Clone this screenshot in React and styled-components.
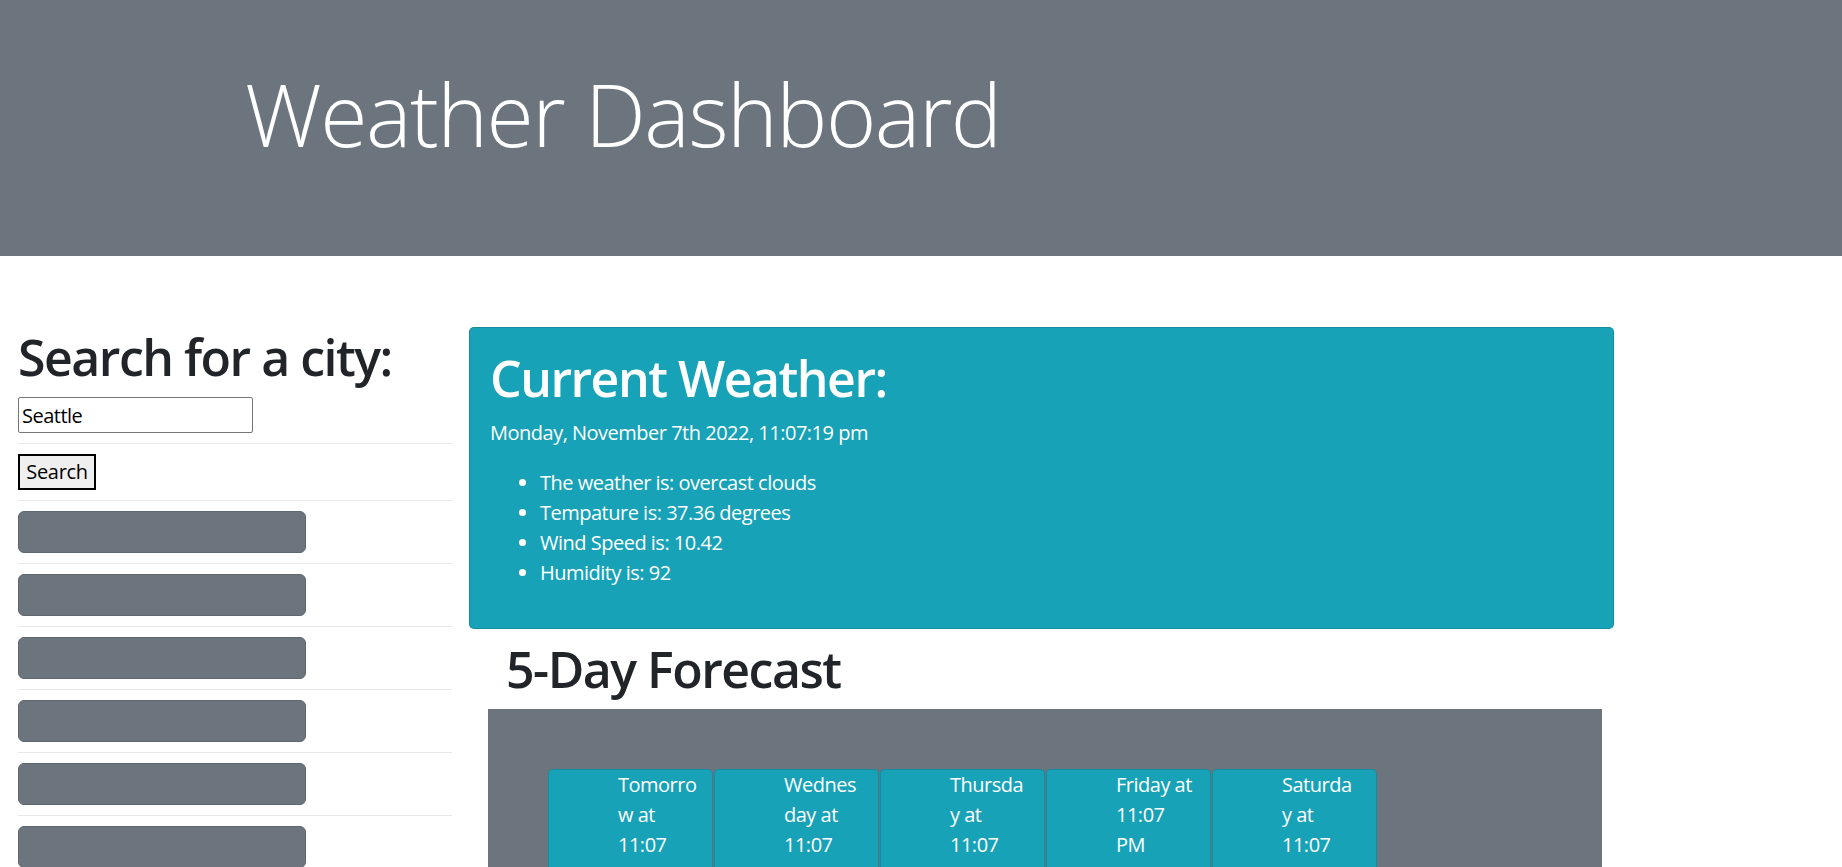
import React from "react";
import styled, { createGlobalStyle } from "styled-components";

const GlobalStyle = createGlobalStyle`
  html { scrollbar-width: none; }
  html::-webkit-scrollbar { display: none; }
  body {
    margin: 0;
    font-family: "Open Sans", "Noto Sans", sans-serif;
    font-size: 20px;
    letter-spacing: -0.5px;
    line-height: 1.5;
    color: #212529;
    background: #fff;
  }
  *, *::before, *::after { box-sizing: border-box; }
`;

const Header = styled.header`
  background: #6c757d;
  height: 256px;
  padding: 62px 0 0 245px;
`;

const Title = styled.h1`
  margin: 0;
  font-family: "Open Sans", sans-serif;
  font-weight: 300;
  font-size: 86px;
  letter-spacing: -1.5px;
  line-height: 104px;
  color: #fff;
`;

const Main = styled.main`
  display: flex;
  align-items: flex-start;
  gap: 17px;
  padding: 71px 0 0 18px;
`;

const Sidebar = styled.aside`
  width: 434px;
  flex: none;
`;

const Heading = styled.h1`
  margin: 0 0 10px ${(p) => p.$indent || 0}px;
  font-size: 50px;
  font-weight: 600;
  letter-spacing: -1.5px;
  line-height: 60px;
  color: ${(p) => (p.$light ? "#fff" : "#212529")};
`;

const SearchList = styled.ul`
  list-style: none;
  margin: 0;
  padding: 0;
`;

const SearchItem = styled.li`
  display: flex;
  padding: ${(p) => (p.$first ? "0 0 10px" : "10px 0")};
  border-bottom: 1px solid #e6e8ea;
`;

const CityInput = styled.input`
  width: 235px;
  height: 36px;
  border: 1px solid #767676;
  border-radius: 2px;
  padding: 1px 3px;
  font-family: inherit;
  font-size: 20px;
  letter-spacing: -0.5px;
  color: #000;
`;

const SearchButton = styled.button`
  width: 78px;
  height: 36px;
  border: 2px solid #000;
  border-radius: 0;
  background: #efefef;
  font-family: inherit;
  font-size: 20px;
  letter-spacing: -0.3px;
  line-height: 1;
  color: #000;
  padding: 0;
`;

const HistoryButton = styled.button`
  width: 288px;
  height: 42px;
  background: #6c757d;
  border: 1px solid #5f676e;
  border-radius: 6px;
`;

const Content = styled.section`
  width: 1145px;
  flex: none;
`;

const CurrentCard = styled.div`
  background: #17a2b8;
  border: 1px solid rgba(0, 0, 0, 0.125);
  border-radius: 5px;
  padding: 20px;
  color: #fff;
`;

const DateLine = styled.p`
  margin: 0 0 20px;
  line-height: 30px;
`;

const Facts = styled.ul`
  margin: 0 0 20px;
  padding-left: 50px;
  line-height: 30px;
`;

const ForecastSection = styled.div`
  margin-top: 10px;
`;

const ForecastBox = styled.div`
  background: #6c757d;
  margin: 0 12px 0 19px;
  padding: 60px;
  height: 400px;
`;

const CardRow = styled.div`
  display: flex;
  gap: 1.5px;
`;

const DayCard = styled.ul`
  width: 164.5px;
  flex: none;
  margin: 0;
  list-style: none;
  background: #17a2b8;
  border: 1px solid rgba(0, 0, 0, 0.125);
  border-radius: 5px;
  padding: 0 8px 20px 69px;
  color: #fff;
  line-height: 30px;
  overflow-wrap: anywhere;
`;

const days = [
  { when: ["Tomorro", "w at", "11:07", "PM"], temp: "38.12", wind: "9.8", hum: "88" },
  { when: ["Wednes", "day at", "11:07", "PM"], temp: "40.5", wind: "7.2", hum: "81" },
  { when: ["Thursda", "y at", "11:07", "PM"], temp: "42.01", wind: "5.4", hum: "76" },
  { when: ["Friday at", "11:07", "PM"], temp: "44.3", wind: "6.1", hum: "79" },
  { when: ["Saturda", "y at", "11:07", "PM"], temp: "43.7", wind: "8.9", hum: "85" },
];

export default function App() {
  return (
    <>
      <GlobalStyle />
      <Header>
        <Title>Weather Dashboard</Title>
      </Header>
      <Main>
        <Sidebar>
          <Heading>Search for a city:</Heading>
          <SearchList>
            <SearchItem $first>
              <CityInput defaultValue="Seattle" />
            </SearchItem>
            <SearchItem>
              <SearchButton>Search</SearchButton>
            </SearchItem>
            {[0, 1, 2, 3, 4, 5].map((i) => (
              <SearchItem key={i}>
                <HistoryButton aria-label="history" />
              </SearchItem>
            ))}
          </SearchList>
        </Sidebar>
        <Content>
          <CurrentCard>
            <Heading $light>Current Weather:</Heading>
            <DateLine>Monday, November 7th 2022, 11:07:19 pm</DateLine>
            <Facts>
              <li>The weather is: overcast clouds</li>
              <li>Tempature is: 37.36 degrees</li>
              <li>Wind Speed is: 10.42</li>
              <li>Humidity is: 92</li>
            </Facts>
          </CurrentCard>
          <ForecastSection>
            <Heading $indent={37}>5-Day Forecast</Heading>
            <ForecastBox>
              <CardRow>
                {days.map((d) => (
                  <DayCard key={d.when.join("")}>
                    <li>
                      {d.when.map((line, i) => (
                        <React.Fragment key={i}>
                          {i > 0 && <br />}
                          {line}
                        </React.Fragment>
                      ))}
                    </li>
                    <li>Temp: {d.temp}</li>
                    <li>Wind: {d.wind}</li>
                    <li>Humidity: {d.hum}</li>
                  </DayCard>
                ))}
              </CardRow>
            </ForecastBox>
          </ForecastSection>
        </Content>
      </Main>
    </>
  );
}
